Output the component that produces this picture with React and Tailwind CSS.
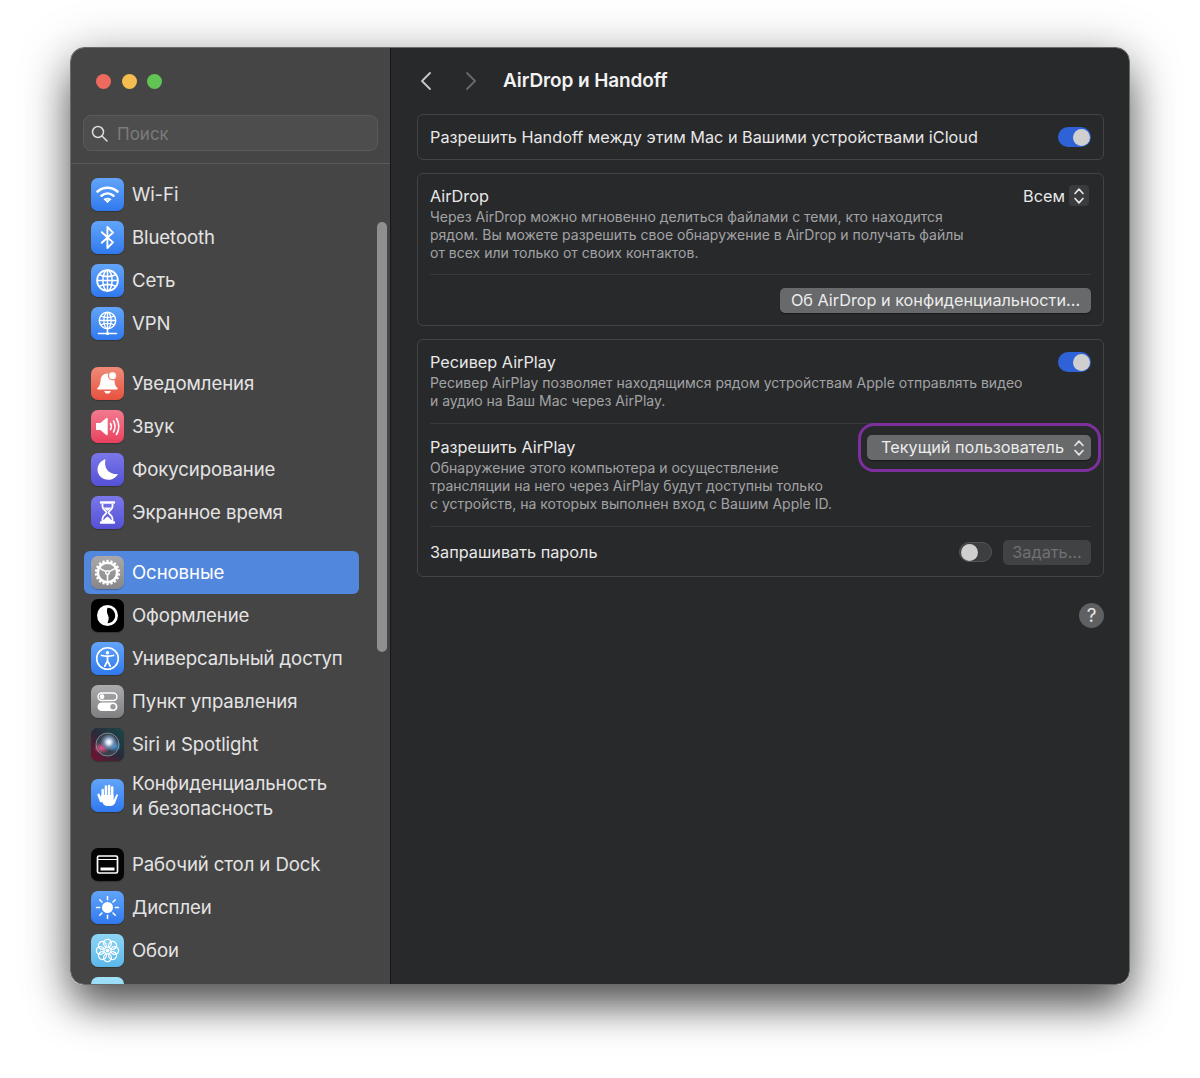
const Wifi = () => (
  <g fill="none" stroke="#fff" strokeLinecap="round" strokeWidth="2.6">
    <path d="M6.5 13.500c6-5 14-5 20 0" />
    <path d="M10.500 17.700c3.600-3 8.400-3 12 0" />
    <path d="M13.500 21.500c2-1.400 4-1.400 6 0" fill="#fff" strokeWidth="1.600" />
    <path d="M14.500 22.500l2 2.200 2-2.200z" fill="#fff" strokeWidth="1" />
  </g>
);
const Bluetooth = () => (
  <path d="M10.800 11.200 22 21.400 16.400 27V6l5.600 5.600-11.200 10.200" fill="none" stroke="#fff" strokeWidth="1.900" strokeLinejoin="round" strokeLinecap="round" />
);
const Globe = () => (
  <g fill="none" stroke="#fff" strokeWidth="1.500">
    <circle cx="16.500" cy="16.500" r="10.400" strokeWidth="1.800" />
    <ellipse cx="16.500" cy="16.500" rx="4.600" ry="10.400" />
    <path d="M16.500 6v21M6.500 16.500h20M8.200 10.800c5 2.200 11.600 2.200 16.600 0M8.200 22.200c5-2.200 11.600-2.200 16.600 0" />
  </g>
);
const Vpn = () => (
  <g fill="none" stroke="#fff" strokeWidth="1.300">
    <circle cx="16.500" cy="13.500" r="8.200" strokeWidth="1.500" />
    <ellipse cx="16.500" cy="13.500" rx="3.600" ry="8.200" />
    <path d="M16.500 5.300v16.400M8.300 13.500h16.400M9.800 9.200c4 1.700 9.400 1.700 13.400 0M9.800 17.800c4-1.700 9.400-1.700 13.400 0" />
    <path d="M16.500 21.700v4.800M7.500 26.500h18" strokeWidth="1.600" strokeLinecap="round" />
    <circle cx="16.500" cy="26.500" r="1.600" fill="#fff" stroke="none" />
  </g>
);
const Bell = () => (
  <g fill="#fff">
    <path d="M16.500 6.500c-4.600 0-6.800 3.400-7 7.400-.2 3.400-1.200 5.400-3 7.200-.6.600-.2 1.400.6 1.400h18.800c.8 0 1.200-.8.600-1.400-1.800-1.800-2.800-3.800-3-7.200-.1-2.700-1.200-5.200-3.400-6.500z" />
    <path d="M13.200 24h6.600c-.4 1.700-1.700 2.600-3.300 2.600s-2.900-.9-3.300-2.600z" />
    <circle cx="21.500" cy="8.700" r="4.800" fill="#ef8a78" />
    <circle cx="21.500" cy="8.700" r="3.400" />
  </g>
);
const Sound = () => (
  <g>
    <path d="M5 13h4.400l6.200-5.200c.5-.4 1.100 0 1.100.6v16.200c0 .6-.6 1-1.100.6L9.400 20H5z" fill="#fff" />
    <g fill="none" stroke="#fff" strokeWidth="1.600" strokeLinecap="round">
      <path d="M19.500 13.500c1.100 1.900 1.100 4.100 0 6" />
      <path d="M22.500 11c1.900 3.400 1.900 7.600 0 11" />
      <path d="M25.500 8.500c2.900 5 2.900 11 0 16" />
    </g>
  </g>
);
const Moon = () => (
  <path d="M14.600 6.200c-1.600 5.600.2 12 7 14.400 1.600.6 3.500.6 5.300.3-1.900 3.600-5.600 5.800-9.600 5.800-6 0-10.800-4.600-10.800-10.300 0-4.700 3.400-9 8.100-10.200z" fill="#fff" />
);
const Hourglass = () => (
  <g>
    <path d="M10 6.500h13M10 26.500h13" stroke="#fff" strokeWidth="2.400" strokeLinecap="round" />
    <path d="M11.500 8v2.500c0 3 4 4.500 4 6s-4 3-4 6V25h10v-2.500c0-3-4-4.500-4-6s4-3 4-6V8" fill="none" stroke="#fff" strokeWidth="1.800" />
    <path d="M13 11.500h7c-.5 1.500-2.500 2.500-3.500 3.500-1-1-3-2-3.500-3.500zM12.800 24.500c0-1.500 2.500-3 3.700-4 1.200 1 3.700 2.500 3.700 4z" fill="#fff" />
  </g>
);
const Gear = () => {
  const teeth = [];
  for (let i = 0; i < 18; i++) teeth.push(i * 20);
  return (
    <g fill="none" stroke="#fff">
      <circle cx="16.500" cy="16.500" r="9.600" strokeWidth="2.400" />
      {teeth.map((a) => (
        <path key={a} d="M16.500 3.800v3" strokeWidth="2.300" transform={`rotate(${a} 16.500 16.500)`} />
      ))}
      <circle cx="16.500" cy="16.500" r="1.800" strokeWidth="1.400" />
      <path d="M14.900 15.600 8.800 12.400M16.500 18.300V25.500M18.100 15.600l6.100-3.200" strokeWidth="1.600" />
    </g>
  );
};
const Appearance = () => (
  <g>
    <circle cx="16.500" cy="16.500" r="10.500" fill="#fff" />
    <path d="M16.500 8.800c4.300 0 7.700 3.400 7.700 7.700s-3.400 7.700-7.700 7.700c.9-2.600 1.900-5.100.6-7.700-1.300-2.600-1.500-5.100-.6-7.700z" fill="#000" />
  </g>
);
const Access = () => (
  <g>
    <circle cx="16.500" cy="16.500" r="10.800" fill="none" stroke="#fff" strokeWidth="1.600" />
    <circle cx="16.500" cy="10.800" r="1.700" fill="#fff" />
    <path d="M10.500 13.500c4 1 8 1 12 0M16.500 14.300v4.500M16.500 18.800l-2.700 5.400M16.500 18.800l2.700 5.400" fill="none" stroke="#fff" strokeWidth="1.800" strokeLinecap="round" />
  </g>
);
const Control = () => (
  <g>
    <rect x="7" y="8" width="19" height="7.500" rx="3.750" fill="none" stroke="#fff" strokeWidth="1.400" />
    <circle cx="11" cy="11.750" r="2.400" fill="#fff" />
    <rect x="6.500" y="17.500" width="20" height="8.500" rx="4.250" fill="#fff" />
    <circle cx="22" cy="21.750" r="2.700" fill="#9a9a9c" />
  </g>
);
const Siri = () => (
  <g>
    <defs>
      <linearGradient id="siriBg" x1="0" y1="1" x2="1" y2="0">
        <stop offset="0" stopColor="#7a1030" />
        <stop offset="0.5" stopColor="#2a2a3a" />
        <stop offset="1" stopColor="#174a48" />
      </linearGradient>
      <radialGradient id="siriCore" cx="0.55" cy="0.45" r="0.5">
        <stop offset="0" stopColor="#ffffff" />
        <stop offset="0.25" stopColor="#dfe8f5" />
        <stop offset="0.6" stopColor="#6f8aa8" />
        <stop offset="1" stopColor="#6f8aa8" stopOpacity="0" />
      </radialGradient>
      <radialGradient id="siriPink" cx="0.5" cy="0.5" r="0.5">
        <stop offset="0" stopColor="#f0508a" />
        <stop offset="1" stopColor="#f0508a" stopOpacity="0" />
      </radialGradient>
      <radialGradient id="siriBlue" cx="0.5" cy="0.5" r="0.5">
        <stop offset="0" stopColor="#3aa0f0" />
        <stop offset="1" stopColor="#3aa0f0" stopOpacity="0" />
      </radialGradient>
    </defs>
    <rect width="33" height="33" rx="7" fill="url(#siriBg)" />
    <circle cx="16.500" cy="16.500" r="11.500" fill="#3a3f4c" />
    <ellipse cx="10.500" cy="20" rx="8" ry="6" fill="url(#siriPink)" />
    <ellipse cx="23" cy="18" rx="7" ry="6" fill="url(#siriBlue)" />
    <circle cx="17" cy="15" r="8.500" fill="url(#siriCore)" />
    <circle cx="16.500" cy="16.500" r="11.500" fill="none" stroke="#9fc4c4" strokeOpacity="0.6" strokeWidth="1" />
  </g>
);
const Hand = () => (
  <g>
    <g stroke="#fff" strokeWidth="2.500" strokeLinecap="round">
      <path d="M11.700 11v8M14.900 7.500v10M18.100 7v10M21.200 8.500v10" />
      <path d="M10 22 7.600 15.800" />
    </g>
    <path d="M10.500 16h12v5l2.600-5c.8-1.200 2.200-.6 1.800.6l-2.800 7.400c-.9 2.100-2.700 3-4.900 3h-2.400c-3 0-4.500-1.500-5.300-3.500l-2-5.300z" fill="#fff" />
  </g>
);
const Dock = () => (
  <g>
    <rect x="6.500" y="8" width="20" height="17" rx="1.500" fill="none" stroke="#fff" strokeWidth="1.700" />
    <path d="M6.500 11.500h20" stroke="#fff" strokeWidth="1.200" />
    <rect x="9.500" y="19.500" width="14" height="3" fill="#fff" />
  </g>
);
const Sun = () => {
  const rays = [0, 45, 90, 135, 180, 225, 270, 315];
  return (
    <g>
      <circle cx="16.500" cy="16.500" r="5.500" fill="#fff" />
      {rays.map((a) => (
        <path key={a} d="M16.500 5.500v3.200" stroke="#fff" strokeWidth="1.500" strokeLinecap="round" transform={`rotate(${a} 16.500 16.500)`} />
      ))}
    </g>
  );
};
const Flower = () => {
  const p = [0, 45, 90, 135, 180, 225, 270, 315];
  return (
    <g fill="none" stroke="#fff" strokeWidth="1.300">
      {p.map((a) => (
        <circle key={a} cx="16.500" cy="9.300" r="3.900" transform={`rotate(${a} 16.500 16.500)`} />
      ))}
      <circle cx="16.500" cy="16.500" r="2" fill="#fff" stroke="none" />
    </g>
  );
};

const IconBox = ({ cls, children }) => (
  <span className={`w-[33px] h-[33px] rounded-[7px] shrink-0 flex shadow-[0_1px_1px_rgba(0,0,0,0.25)] ${cls}`}>
    <svg viewBox="0 0 33 33" width="33" height="33">{children}</svg>
  </span>
);

const blue = "bg-linear-to-b from-[#62a4f8] to-[#3079ee]";
const groups = [
  [
    ["Wi-Fi", blue, <Wifi />],
    ["Bluetooth", blue, <Bluetooth />],
    ["Сеть", blue, <Globe />],
    ["VPN", blue, <Vpn />],
  ],
  [
    ["Уведомления", "bg-linear-to-b from-[#ef8a78] to-[#e8503f]", <Bell />],
    ["Звук", "bg-linear-to-b from-[#f2798f] to-[#e9405f]", <Sound />],
    ["Фокусирование", "bg-linear-to-b from-[#7b77ea] to-[#5550d6]", <Moon />],
    ["Экранное время", "bg-linear-to-b from-[#7b77ea] to-[#5550d6]", <Hourglass />],
  ],
  [
    ["Основные", "bg-linear-to-b from-[#a9a9ab] to-[#878789]", <Gear />, true],
    ["Оформление", "bg-black", <Appearance />],
    ["Универсальный доступ", blue, <Access />],
    ["Пункт управления", "bg-linear-to-b from-[#acacae] to-[#7f7f81]", <Control />],
    ["Siri и Spotlight", "bg-[#2a2a3a]", <Siri />],
    [["Конфиденциальность", "и безопасность"], blue, <Hand />],
  ],
  [
    ["Рабочий стол и Dock", "bg-[#050505]", <Dock />],
    ["Дисплеи", blue, <Sun />],
    ["Обои", "bg-linear-to-b from-[#8ed6f5] to-[#5ab8ea]", <Flower />],
    ["", "bg-linear-to-b from-[#9fe0f8] to-[#7fd0f0]", null],
  ],
];

const Row = ({ label, cls, icon, active }) => {
  const two = Array.isArray(label);
  return (
    <div className={`flex items-center gap-[8px] pl-[7px] -ml-px rounded-[6px] w-[275px] ${two ? "h-[60px]" : "h-[43px]"} ${active ? "bg-[#5287de] text-white" : "text-[#e4e4e4]"}`}>
      <IconBox cls={cls}>{icon}</IconBox>
      <span className="text-[18.600px] leading-[25px] tracking-[-0.1px] whitespace-nowrap">
        {two ? label.map((l) => <span key={l} className="block">{l}</span>) : label}
      </span>
    </div>
  );
};

const Toggle = ({ on }) => (
  <span className={`w-[33px] h-[20px] rounded-full flex items-center px-px shrink-0 ${on ? "bg-[#2f62d6] justify-end" : "bg-[#3d3e40] border border-[#555] justify-start"}`}>
    <span className="w-[17px] h-[17px] rounded-full bg-[#cfcfcf]" />
  </span>
);

const Updown = ({ size = 12 }) => (
  <svg width={size} height={size * 1.5} viewBox="0 0 12 18" fill="none" stroke="#e4e4e4" strokeWidth="1.700" strokeLinecap="round" strokeLinejoin="round">
    <path d="M2 6.500 6 2.200l4 4.300M2 11.500l4 4.300 4-4.300" />
  </svg>
);

const Desc = ({ children }) => (
  <div className="mt-px text-[14px] leading-[18px] text-[#a2a3a4] whitespace-nowrap">{children}</div>
);
const Title = ({ children }) => (
  <div className="text-[16.250px] leading-[22px] text-[#e8e8e8] whitespace-nowrap">{children}</div>
);
const Card = ({ className = "", children }) => (
  <div className={`border border-[#434446] rounded-[6px] ${className}`}>{children}</div>
);
const Rule = () => <div className="h-px bg-[#38393b]" />;

export default function App() {
  return (
    <div className="w-[1200px] h-[1078px] bg-white pt-[47px] pl-[70px] font-['Inter','Liberation_Sans',sans-serif]">
      <div className="w-[1060px] h-[938px] flex rounded-[14px] overflow-hidden border border-[#6a6a6a] shadow-[0_25px_40px_-5px_rgba(0,0,0,0.55),0_8px_50px_rgba(0,0,0,0.35)]">
        <aside className="w-[319px] shrink-0 bg-[#454545] flex flex-col relative">
          <div className="flex gap-[10.500px] pl-[25px] pt-[26px] h-[67px]">
            <span className="w-[15px] h-[15px] rounded-full bg-[#ee6a5f]" />
            <span className="w-[15px] h-[15px] rounded-full bg-[#f5bd4f]" />
            <span className="w-[15px] h-[15px] rounded-full bg-[#61c454]" />
          </div>
          <div className="mx-[12px] h-[36px] rounded-[8px] bg-[#4d4d4d] border border-[#5a5a5a] flex items-center pl-[7px] gap-[9px]">
            <svg width="17" height="17" viewBox="0 0 17 17" fill="none" stroke="#dcdcdc" strokeWidth="1.500" strokeLinecap="round">
              <circle cx="7" cy="7" r="5.500" />
              <path d="m11 11 5 5" />
            </svg>
            <span className="text-[17px] leading-[24px] pt-[2px] text-[#7b7b7b]">Поиск</span>
          </div>
          <div className="h-px bg-[#5a5a5a] mt-[12px]" />
          <div className="flex-1 overflow-hidden pt-[8.500px] pl-[14px] flex flex-col gap-[17px]">
            {groups.map((g, i) => (
              <div key={i}>
                {g.map(([label, cls, icon, active], j) => (
                  <Row key={j} label={label} cls={cls} icon={icon} active={active} />
                ))}
              </div>
            ))}
          </div>
          <div className="absolute left-[306px] top-[174px] w-[10px] h-[430px] rounded-full bg-[#8f8f8f]" />
        </aside>
        <main className="flex-1 bg-[#28292b] border-l border-[#161618] pl-[26px] pr-[25px]">
          <header className="h-[66px] flex items-center">
            <svg width="12" height="20" viewBox="0 0 12 20" fill="none" stroke="#c9c9ca" strokeWidth="1.800" strokeLinecap="round" strokeLinejoin="round" className="ml-[3px]">
              <path d="M10 2 2 10l8 8" />
            </svg>
            <svg width="12" height="20" viewBox="0 0 12 20" fill="none" stroke="#68696a" strokeWidth="1.800" strokeLinecap="round" strokeLinejoin="round" className="ml-[33px]">
              <path d="m2 2 8 8-8 8" />
            </svg>
            <h1 className="ml-[26px] text-[19px] font-semibold text-[#f2f2f2] tracking-[-0.1px]">AirDrop и Handoff</h1>
          </header>
          <div className="flex flex-col gap-[13px]">
            <Card className="h-[46px] px-[12px] flex items-center justify-between">
              <Title>Разрешить Handoff между этим Мас и Вашими устройствами iCloud</Title>
              <Toggle on />
            </Card>
            <Card className="h-[153px] px-[12px] pt-[11px]">
              <div className="flex justify-between h-[89px]">
                <div>
                  <Title>AirDrop</Title>
                  <Desc>
                    Через AirDrop можно мгновенно делиться файлами с теми, кто находится<br />
                    рядом. Вы можете разрешить свое обнаружение в AirDrop и получать файлы<br />
                    от всех или только от своих контактов.
                  </Desc>
                </div>
                <div className="flex items-start gap-[4px] mr-[2px]">
                  <span className="text-[16.250px] leading-[22px] text-[#e8e8e8]">Всем</span>
                  <span className="w-[20px] h-[21px] rounded-[4px] bg-[#3a3b3d] flex items-center justify-center">
                    <Updown />
                  </span>
                </div>
              </div>
              <Rule />
              <div className="flex justify-end mt-[13px]">
                <button className="h-[25px] w-[311px] rounded-[5px] bg-[#68696b] text-[16.250px] text-[#ececec] shadow-[0_1px_1px_rgba(0,0,0,0.4)] whitespace-nowrap">
                  Об AirDrop и конфиденциальности...
                </button>
              </div>
            </Card>
            <Card className="h-[238px] px-[12px]">
              <div className="flex justify-between h-[83px] pt-[11px]">
                <div>
                  <Title>Ресивер AirPlay</Title>
                  <Desc>
                    Ресивер AirPlay позволяет находящимся рядом устройствам Apple отправлять видео<br />
                    и аудио на Ваш Мас через AirPlay.
                  </Desc>
                </div>
                <div className="pt-[1px]"><Toggle on /></div>
              </div>
              <Rule />
              <div className="flex justify-between h-[102px] pt-[11px]">
                <div className="pt-px">
                  <Title>Разрешить AirPlay</Title>
                  <Desc>
                    Обнаружение этого компьютера и осуществление<br />
                    трансляции на него через AirPlay будут доступны только<br />
                    с устройств, на которых выполнен вход с Вашим Apple ID.
                  </Desc>
                </div>
                <div className="relative h-[25px] w-[224px] rounded-[5px] bg-[#68696b] flex items-center justify-between pl-[14px] pr-[6px] shadow-[0_1px_1px_rgba(0,0,0,0.4)]">
                  <span className="text-[16.250px] text-[#ececec] whitespace-nowrap">Текущий пользователь</span>
                  <Updown />
                  <div className="absolute -left-[9px] -right-[10px] -top-[12px] -bottom-[12px] border-[3px] border-[#7e2f9e] rounded-[16px]" />
                </div>
              </div>
              <Rule />
              <div className="flex items-center justify-between h-[50px]">
                <Title>Запрашивать пароль</Title>
                <div className="flex items-center gap-[11px]">
                  <Toggle />
                  <button className="h-[25px] w-[88px] rounded-[5px] bg-[#414244] text-[16.250px] text-[#707172] whitespace-nowrap">Задать...</button>
                </div>
              </div>
            </Card>
          </div>
          <div className="flex justify-end mt-[26px]">
            <span className="w-[25px] h-[25px] rounded-full bg-[#5f6062] text-[#e4e4e4] text-[19px] leading-none flex items-center justify-center">?</span>
          </div>
        </main>
      </div>
    </div>
  );
}
